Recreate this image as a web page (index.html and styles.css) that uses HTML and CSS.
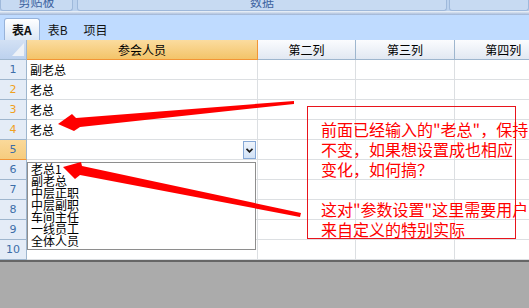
FILE: index.html
```html
<!DOCTYPE html>
<html>
<head>
    <meta charset="utf-8">
    <link rel="stylesheet" href="styles.css">
</head>
<body>
    <div class="ribbon">
        <div class="group g1"><span>剪贴板</span></div>
        <div class="group g2"><span>数据</span></div>
        <div class="group g3"></div>
    </div>
    <div class="ribbon-edge"></div>

    <div class="tabs">
        <div class="tab active">表A</div>
        <div class="tab">表B</div>
        <div class="tab">项目</div>
    </div>

    <div class="sheet">
        <table class="grid">
            <colgroup>
                <col class="w-rn"><col class="w-a"><col class="w-c"><col class="w-c"><col class="w-c">
            </colgroup>
            <tr class="head">
                <th class="corner"><span class="tri"></span></th>
                <th class="col-a">参会人员</th>
                <th>第二列</th>
                <th>第三列</th>
                <th>第四列</th>
            </tr>
            <tr><th class="rn">1</th><td>副老总</td><td></td><td></td><td></td></tr>
            <tr><th class="rn hl">2</th><td>老总</td><td></td><td></td><td></td></tr>
            <tr><th class="rn hl">3</th><td>老总</td><td></td><td></td><td></td></tr>
            <tr><th class="rn hl">4</th><td>老总</td><td></td><td></td><td></td></tr>
            <tr><th class="rn sel">5</th><td></td><td></td><td></td><td></td></tr>
            <tr><th class="rn">6</th><td></td><td></td><td></td><td></td></tr>
            <tr><th class="rn">7</th><td></td><td></td><td></td><td></td></tr>
            <tr><th class="rn">8</th><td></td><td></td><td></td><td></td></tr>
            <tr><th class="rn">9</th><td></td><td></td><td></td><td></td></tr>
            <tr><th class="rn">10</th><td></td><td></td><td></td><td></td></tr>
        </table>
    </div>

    <!-- 下拉按钮和列表 -->
    <div class="drop-btn">
        <svg width="7" height="5" viewBox="0 0 7 5"><polyline points="0.5,0.8 3.5,3.8 6.5,0.8" fill="none" stroke="#1a1a1a" stroke-width="1.8"/></svg>
    </div>
    <div class="listbox">
        <div>老总1</div>
        <div>副老总</div>
        <div>中层正职</div>
        <div>中层副职</div>
        <div>车间主任</div>
        <div>一线员工</div>
        <div>全体人员</div>
    </div>

    <!-- 批注 -->
    <svg class="arrows" width="529" height="308" viewBox="0 0 529 308">
        <polygon points="58,124 72,114 76,118 294,101 294,104 80,127 74,131" fill="#ff0000"/>
        <polygon points="63,167 81,162 82,166 301,213 300,217 80,175 75,179" fill="#ff0000"/>
    </svg>
    <div class="note">
        前面已经输入的"老总"，保持<br>
        不变，如果想设置成也相应<br>
        变化，如何搞？<br>
        <br>
        这对"参数设置"这里需要用户<br>
        来自定义的特别实际
    </div>
</body>
</html>
```

FILE: styles.css
```css
body {
    margin: 0;
    width: 529px;
    height: 308px;
    overflow: hidden;
    position: relative;
    background: #ababab;
    font-family: "Noto Sans CJK SC", sans-serif;
    font-size: 12px;
}

.ribbon {
    height: 11px;
    display: flex;
    background: #bcd2ee;
    overflow: hidden;
}

.group {
    height: 10px;
    background: #c7daf2;
    border: 1px solid #9fb9db;
    border-top: none;
    border-radius: 0 0 3px 3px;
    color: #3d63a0;
    text-align: center;
    line-height: 12px;
    overflow: hidden;
}

.group span {
    display: block;
    margin-top: -4px;
}

.g1 {
    width: 71px;
    margin-right: 4px;
}

.g2 {
    width: 368px;
    margin-right: 2px;
}

.g3 {
    flex: 1;
}

.ribbon-edge {
    height: 4px;
    background: linear-gradient(#eef4fb, #9db3d5);
}

.tabs {
    height: 25px;
    display: flex;
    align-items: flex-end;
    background: #bfdbff;
    padding-left: 4px;
}

.tab {
    height: 21px;
    line-height: 21px;
    padding: 0 8px;
    color: #111;
}

.tab.active {
    height: 21px;
    padding: 0 7px;
    background: linear-gradient(#ffffff, #dbe7f6);
    border: 1px solid #97b3da;
    border-bottom: none;
    border-radius: 3px 3px 0 0;
    font-weight: bold;
}

.sheet {
    width: 529px;
    height: 220px;
    overflow: hidden;
    background: white;
    border-bottom: 2px solid #666;
}

.grid {
    table-layout: fixed;
    width: 553px;
    border-collapse: separate;
    border-spacing: 0;
}

.w-rn { width: 27px; }
.w-a { width: 230px; }
.w-c { width: 98px; }

.grid td,
.grid th {
    height: 19px;
    padding: 0;
    font-weight: normal;
    white-space: nowrap;
    overflow: hidden;
}

.grid td {
    border-right: 1px solid #dcdfe2;
    border-bottom: 1px solid #dcdfe2;
    padding-left: 3px;
    color: #000;
}

.head th {
    background: linear-gradient(#fbfcfe, #e1e8f2);
    border-right: 1px solid #9eb6ce;
    border-bottom: 1px solid #9eb6ce;
    text-align: center;
}

.head th.col-a {
    background: linear-gradient(#fbdc9f, #f3c469);
    border-right-color: #f29536;
    border-bottom-color: #f29536;
}

.head th.corner {
    position: relative;
    background: linear-gradient(#d3e1f4, #bcd1ee);
}

.tri {
    position: absolute;
    right: 2px;
    bottom: 3px;
    width: 0;
    height: 0;
    border-left: 12px solid transparent;
    border-bottom: 13px solid #eef2f7;
}

.grid th.rn {
    background: #e4ecf7;
    border-right: 1px solid #9eb6ce;
    border-bottom: 1px solid #9eb6ce;
    color: #3c6ea8;
    font-family: "DejaVu Sans", sans-serif;
    font-size: 11px;
    text-align: center;
}

.grid th.rn.hl {
    color: #f0a020;
}

.grid th.rn.sel {
    background: linear-gradient(#fad99a, #f6cc7e);
    border-bottom-color: #f29536;
}

.drop-btn {
    position: absolute;
    left: 243px;
    top: 141px;
    width: 11px;
    height: 16px;
    background: linear-gradient(#eef4fc, #d2e2f6);
    border: 1px solid #86a8d6;
    display: flex;
    align-items: center;
    justify-content: center;
}

.listbox {
    position: absolute;
    left: 27px;
    top: 162px;
    width: 224px;
    height: 86px;
    padding-left: 3px;
    background: white;
    border: 1px solid #8e8e8e;
    line-height: 12px;
    color: #000;
    overflow: hidden;
}

.arrows {
    position: absolute;
    left: 0;
    top: 0;
}

.note {
    position: absolute;
    left: 307px;
    top: 106px;
    width: 209px;
    height: 133px;
    box-sizing: border-box;
    padding: 12px 0 0 13px;
    border: 1px solid #e8141c;
    color: #ff0000;
    font-size: 16px;
    line-height: 20px;
    white-space: nowrap;
}
```
